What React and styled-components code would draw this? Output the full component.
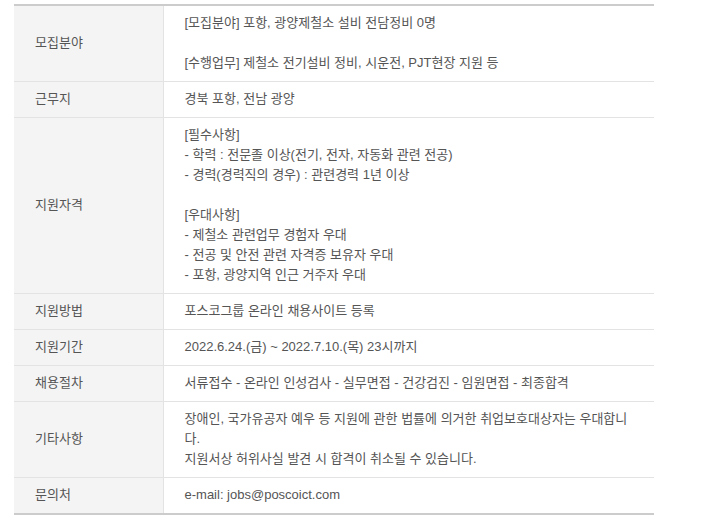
import styled, { createGlobalStyle } from "styled-components";

const GlobalStyle = createGlobalStyle`
  html, body {
    margin: 0;
    padding: 0;
    background: #fff;
  }
  body {
    font-family: "Liberation Sans", "Noto Sans CJK KR", sans-serif;
    font-size: 13px;
    color: #555;
  }
`;

const Wrap = styled.div`
  padding: 4px 0 0 14px;
`;

const Table = styled.table`
  width: 640px;
  border-collapse: collapse;
  border-top: 2px solid #cccccc;
  border-bottom: 2px solid #cccccc;
  table-layout: fixed;
`;

const Row = styled.tr`
  border-top: 1px solid #e3e3e3;
  &:first-child {
    border-top: none;
  }
`;

const Label = styled.th`
  width: 149px;
  box-sizing: border-box;
  background: #f4f4f4;
  border-right: 1px solid #e3e3e3;
  padding: 7px 10px 8px 21px;
  text-align: left;
  font-weight: normal;
  line-height: 20px;
  color: #555;
  vertical-align: middle;
`;

const Cell = styled.td`
  padding: 7px 20px 8px 21px;
  line-height: 20px;
  color: #555;
`;

const Line = styled.div`
  min-height: 20px;
`;

const rows = [
  {
    label: "모집분야",
    lines: [
      "[모집분야] 포항, 광양제철소 설비 전담정비 0명",
      "",
      "[수행업무] 제철소 전기설비 정비, 시운전, PJT현장 지원 등",
    ],
  },
  { label: "근무지", lines: ["경북 포항, 전남 광양"] },
  {
    label: "지원자격",
    lines: [
      "[필수사항]",
      "- 학력 : 전문졸 이상(전기, 전자, 자동화 관련 전공)",
      "- 경력(경력직의 경우) : 관련경력 1년 이상",
      "",
      "[우대사항]",
      "- 제철소 관련업무 경험자 우대",
      "- 전공 및 안전 관련 자격증 보유자 우대",
      "- 포항, 광양지역 인근 거주자 우대",
    ],
  },
  { label: "지원방법", lines: ["포스코그룹 온라인 채용사이트 등록"] },
  { label: "지원기간", lines: ["2022.6.24.(금) ~ 2022.7.10.(목) 23시까지"] },
  {
    label: "채용절차",
    lines: ["서류접수 - 온라인 인성검사 - 실무면접 - 건강검진 - 임원면접 - 최종합격"],
  },
  {
    label: "기타사항",
    lines: [
      "장애인, 국가유공자 예우 등 지원에 관한 법률에 의거한 취업보호대상자는 우대합니다.",
      "지원서상 허위사실 발견 시 합격이 취소될 수 있습니다.",
    ],
  },
  { label: "문의처", lines: ["e-mail: jobs@poscoict.com"] },
];

export default function App() {
  return (
    <Wrap>
      <GlobalStyle />
      <Table>
        <tbody>
          {rows.map((r) => (
            <Row key={r.label}>
              <Label>{r.label}</Label>
              <Cell>
                {r.lines.map((l, i) => (
                  <Line key={i}>{l}</Line>
                ))}
              </Cell>
            </Row>
          ))}
        </tbody>
      </Table>
    </Wrap>
  );
}
